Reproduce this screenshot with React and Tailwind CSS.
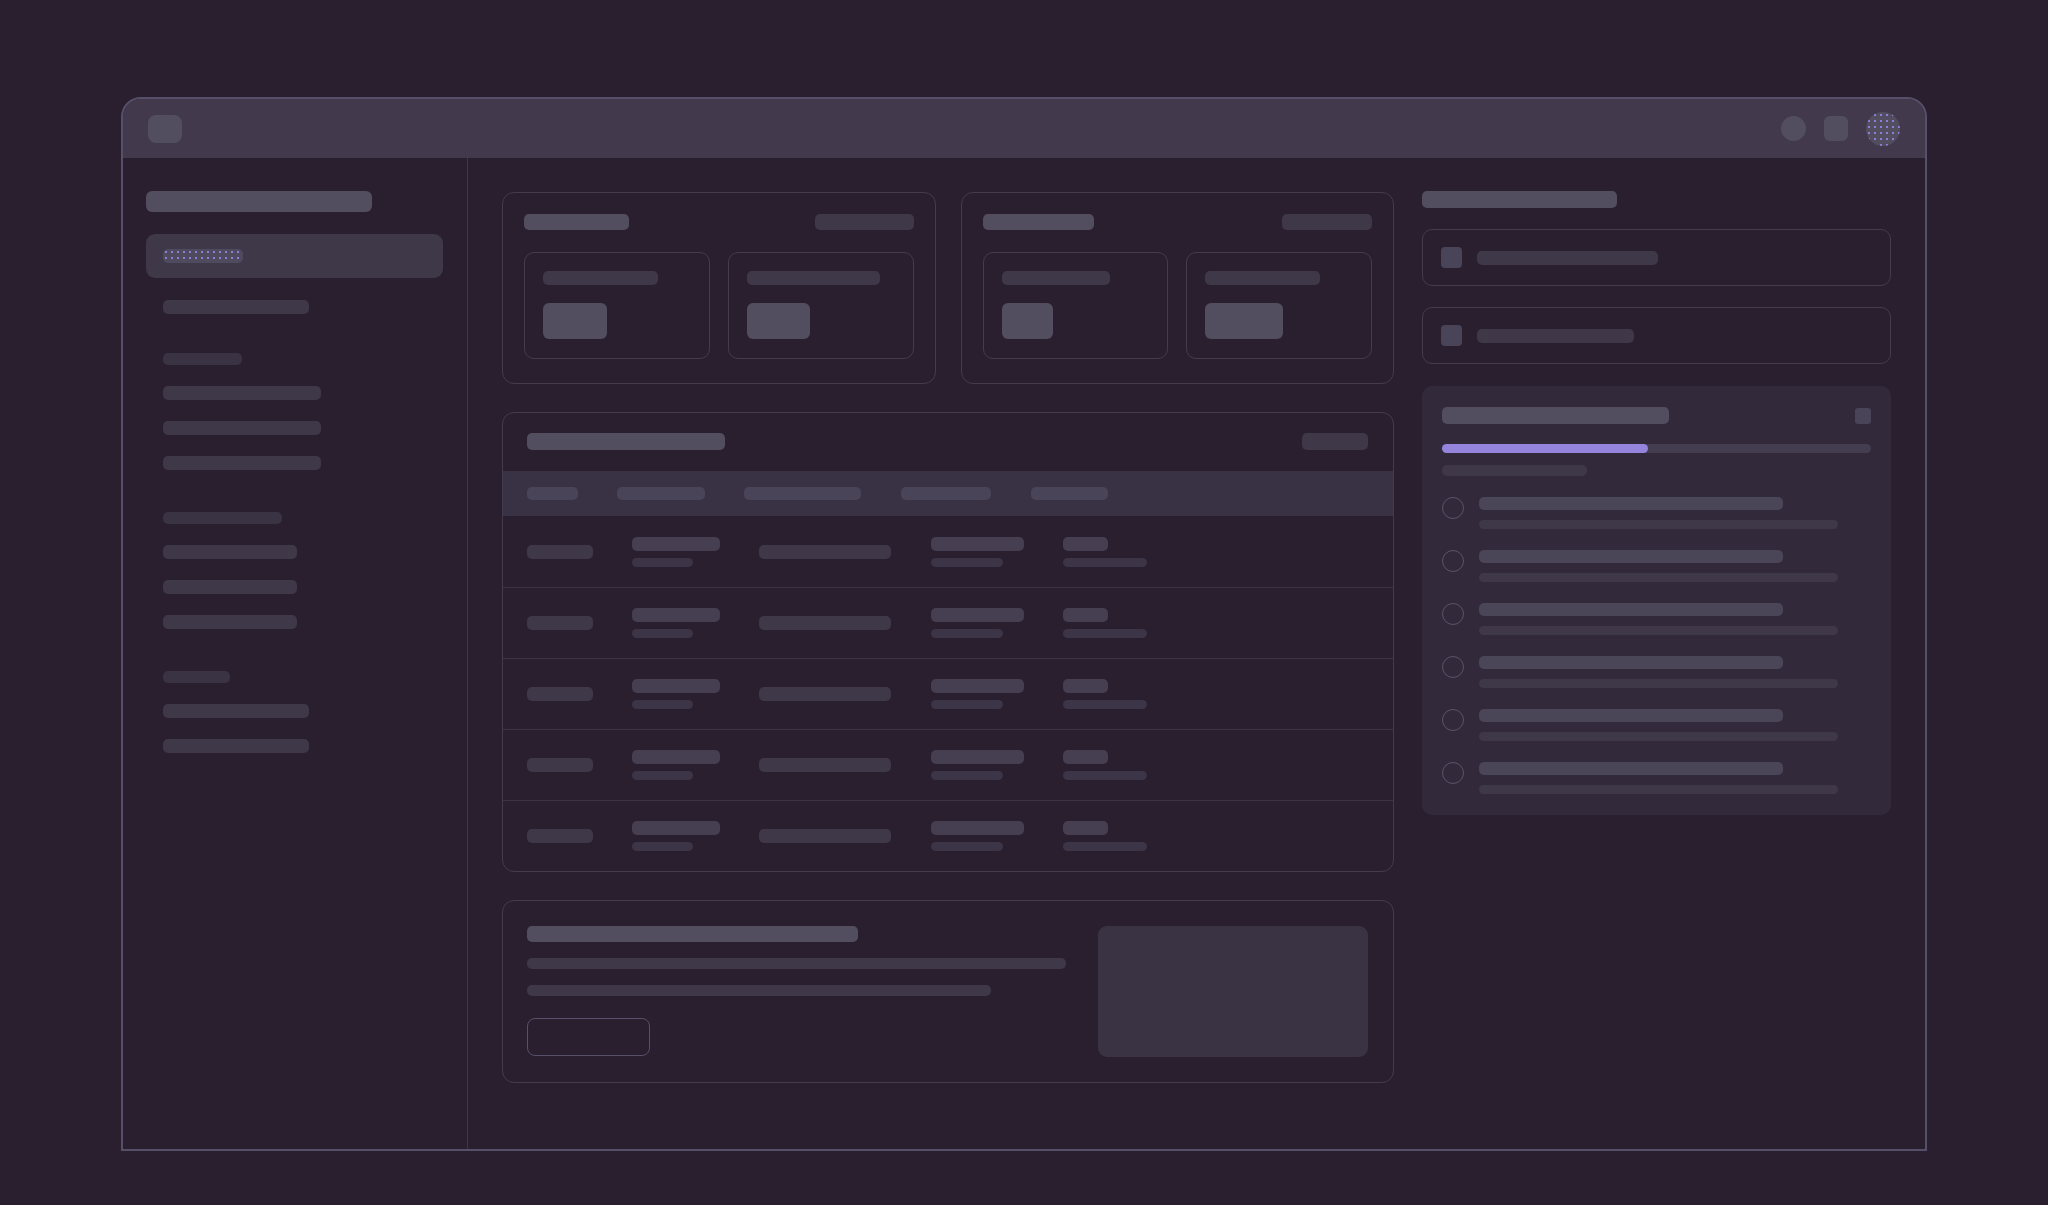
import React from 'react';

const dots = 'bg-[radial-gradient(circle,#8d80dc_0.7px,transparent_1.1px)] bg-[length:6px_6px]';

const navGroups = [
  { gap: 'mt-[39px]', label: 'w-[79px]', items: ['w-[158px]', 'w-[158px]', 'w-[158px]'] },
  { gap: 'mt-[42px]', label: 'w-[119px]', items: ['w-[134px]', 'w-[134px]', 'w-[134px]'] },
  { gap: 'mt-[42px]', label: 'w-[67px]', items: ['w-[146px]', 'w-[146px]'] },
];

const Sidebar = () => (
  <aside className="w-[345px] shrink-0 border-r border-[#3e3748] px-[23px] pt-[33px]">
    <div className="h-[21px] w-[226px] rounded-[6px] bg-[#524d5f]" />
    <div className="mt-[22px] flex h-[44px] w-[297px] items-center rounded-[9px] bg-[#3f3849] px-[17px]">
      <div className={`h-[14px] w-[80px] rounded-[5px] bg-[#4f4a5e] ${dots}`} />
    </div>
    <div className="pl-[17px]">
      <div className="mt-[22px] h-[14px] w-[146px] rounded-[5px] bg-[#3f3849]" />
      {navGroups.map((g, i) => (
        <div key={i} className={g.gap}>
          <div className={`h-[12px] rounded-[5px] bg-[#3a3343] ${g.label}`} />
          <div className="mt-[21px] flex flex-col gap-[21px]">
            {g.items.map((w, j) => (
              <div key={j} className={`h-[14px] rounded-[5px] bg-[#3f3849] ${w}`} />
            ))}
          </div>
        </div>
      ))}
    </div>
  </aside>
);

const StatCard = ({ title, pill, tiles }) => (
  <div className="h-[192px] rounded-[12px] border border-[#433c4e] p-[21px]">
    <div className="flex items-center justify-between">
      <div className={`h-[16px] rounded-[5px] bg-[#524d5f] ${title}`} />
      <div className={`h-[16px] rounded-[5px] bg-[#3f3849] ${pill}`} />
    </div>
    <div className="mt-[22px] grid grid-cols-2 gap-[18px]">
      {tiles.map((t, i) => (
        <div key={i} className="h-[107px] rounded-[10px] border border-[#433c4e] px-[18px] pt-[18px]">
          <div className={`h-[14px] rounded-[5px] bg-[#3f3849] ${t.bar}`} />
          <div className={`mt-[18px] h-[36px] rounded-[6px] bg-[#524d5f] ${t.block}`} />
        </div>
      ))}
    </div>
  </div>
);

const headCols = [
  ['w-[90px]', 'w-[51px]'],
  ['w-[127px]', 'w-[88px]'],
  ['w-[157px]', 'w-[117px]'],
  ['w-[130px]', 'w-[90px]'],
  ['w-[130px]', 'w-[77px]'],
];

const TableRow = ({ first }) => (
  <div className={`flex h-[71px] items-center pl-[24px] ${first ? '' : 'border-t border-[#3a3344]'}`}>
    <div className="w-[105px]">
      <div className="h-[14px] w-[66px] rounded-[5px] bg-[#3f3849]" />
    </div>
    <div className="flex w-[127px] flex-col gap-[7px]">
      <div className="h-[14px] w-[88px] rounded-[5px] bg-[#463f52]" />
      <div className="h-[9px] w-[61px] rounded-[5px] bg-[#3c3547]" />
    </div>
    <div className="w-[172px]">
      <div className="h-[14px] w-[132px] rounded-[5px] bg-[#3f3849]" />
    </div>
    <div className="flex w-[132px] flex-col gap-[7px]">
      <div className="h-[14px] w-[93px] rounded-[5px] bg-[#463f52]" />
      <div className="h-[9px] w-[72px] rounded-[5px] bg-[#3c3547]" />
    </div>
    <div className="flex flex-col gap-[7px]">
      <div className="h-[14px] w-[45px] rounded-[5px] bg-[#463f52]" />
      <div className="h-[9px] w-[84px] rounded-[5px] bg-[#3c3547]" />
    </div>
  </div>
);

const TableCard = () => (
  <div className="rounded-[12px] border border-[#433c4e]">
    <div className="flex items-center justify-between pb-[21px] pl-[24px] pr-[25px] pt-[20px]">
      <div className="h-[17px] w-[198px] rounded-[5px] bg-[#524d5f]" />
      <div className="h-[17px] w-[66px] rounded-[5px] bg-[#3f3849]" />
    </div>
    <div className="flex h-[45px] items-center bg-[#393244] pl-[24px]">
      {headCols.map(([cell, pill], i) => (
        <div key={i} className={cell}>
          <div className={`h-[13px] rounded-[5px] bg-[#4a4458] ${pill}`} />
        </div>
      ))}
    </div>
    {[0, 1, 2, 3, 4].map((r) => (
      <TableRow key={r} first={r === 0} />
    ))}
  </div>
);

const PromoCard = () => (
  <div className="flex h-[183px] rounded-[12px] border border-[#433c4e] p-[25px] pl-[24px]">
    <div className="flex-1">
      <div className="h-[16px] w-[331px] rounded-[5px] bg-[#524d5f]" />
      <div className="mt-[16px] h-[11px] w-[539px] rounded-[5px] bg-[#3f3849]" />
      <div className="mt-[16px] h-[11px] w-[464px] rounded-[5px] bg-[#3f3849]" />
      <div className="mt-[22px] h-[38px] w-[123px] rounded-[8px] border-[1.5px] border-[#57506a]" />
    </div>
    <div className="h-[131px] w-[270px] rounded-[9px] bg-[#3a3344]" />
  </div>
);

const ChecklistItem = () => (
  <div className="flex gap-[15px]">
    <div className="h-[22px] w-[22px] shrink-0 rounded-full border-[1.5px] border-[#5a5468]" />
    <div>
      <div className="h-[13px] w-[304px] rounded-[5px] bg-[#4b4558]" />
      <div className="mt-[10px] h-[9px] w-[359px] rounded-[5px] bg-[#3f3849]" />
    </div>
  </div>
);

const RightColumn = () => (
  <div className="w-[469px] shrink-0">
    <div className="-mt-px h-[17px] w-[195px] rounded-[5px] bg-[#524d5f]" />
    <div className="mt-[21px] flex flex-col gap-[21px]">
      {['w-[181px]', 'w-[157px]'].map((w, i) => (
        <div key={i} className="flex h-[57px] items-center gap-[15px] rounded-[10px] border border-[#433c4e] px-[18px]">
          <div className="h-[21px] w-[21px] rounded-[4px] bg-[#4a4458]" />
          <div className={`h-[14px] rounded-[5px] bg-[#3f3849] ${w}`} />
        </div>
      ))}
    </div>
    <div className="mt-[22px] rounded-[10px] bg-[#322a3b] px-[20px] pb-[21px] pt-[21px]">
      <div className="flex items-center justify-between">
        <div className="h-[17px] w-[227px] rounded-[5px] bg-[#524d5f]" />
        <div className="h-[16px] w-[16px] rounded-[3px] bg-[#4a4458]" />
      </div>
      <div className="mt-[20px] h-[9px] w-full rounded-full bg-[#443d50]">
        <div className="h-full w-[48%] rounded-full bg-[#9484dc]" />
      </div>
      <div className="mt-[12px] h-[11px] w-[145px] rounded-[5px] bg-[#3f3849]" />
      <div className="mt-[21px] flex flex-col gap-[21px]">
        {[0, 1, 2, 3, 4, 5].map((i) => (
          <ChecklistItem key={i} />
        ))}
      </div>
    </div>
  </div>
);

const App = () => {
  return (
    <div className="flex min-h-screen justify-center bg-[#2a1f2f] pt-[97px]">
      <div className="flex h-[1054px] w-[1806px] flex-col overflow-hidden rounded-t-[20px] border-2 border-[#57506a]">
        <header className="flex h-[59px] shrink-0 items-center justify-between bg-[#423a4c] px-[25px]">
          <div className="h-[28px] w-[34px] rounded-[8px] bg-[#524d5f]" />
          <div className="flex items-center gap-[18px]">
            <div className="h-[25px] w-[25px] rounded-full bg-[#524d5f]" />
            <div className="h-[25px] w-[24px] rounded-[6px] bg-[#524d5f]" />
            <div className={`h-[34px] w-[34px] rounded-full bg-[#524d5f] ${dots}`} />
          </div>
        </header>
        <div className="flex flex-1">
          <Sidebar />
          <main className="flex flex-1 gap-[28px] p-[34px]">
            <div className="flex w-[892px] shrink-0 flex-col gap-[28px]">
              <div className="grid grid-cols-2 gap-[25px]">
                <StatCard
                  title="w-[105px]"
                  pill="w-[99px]"
                  tiles={[
                    { bar: 'w-[115px]', block: 'w-[64px]' },
                    { bar: 'w-[133px]', block: 'w-[63px]' },
                  ]}
                />
                <StatCard
                  title="w-[111px]"
                  pill="w-[90px]"
                  tiles={[
                    { bar: 'w-[108px]', block: 'w-[51px]' },
                    { bar: 'w-[115px]', block: 'w-[78px]' },
                  ]}
                />
              </div>
              <TableCard />
              <PromoCard />
            </div>
            <RightColumn />
          </main>
        </div>
      </div>
    </div>
  );
};

export default App;
